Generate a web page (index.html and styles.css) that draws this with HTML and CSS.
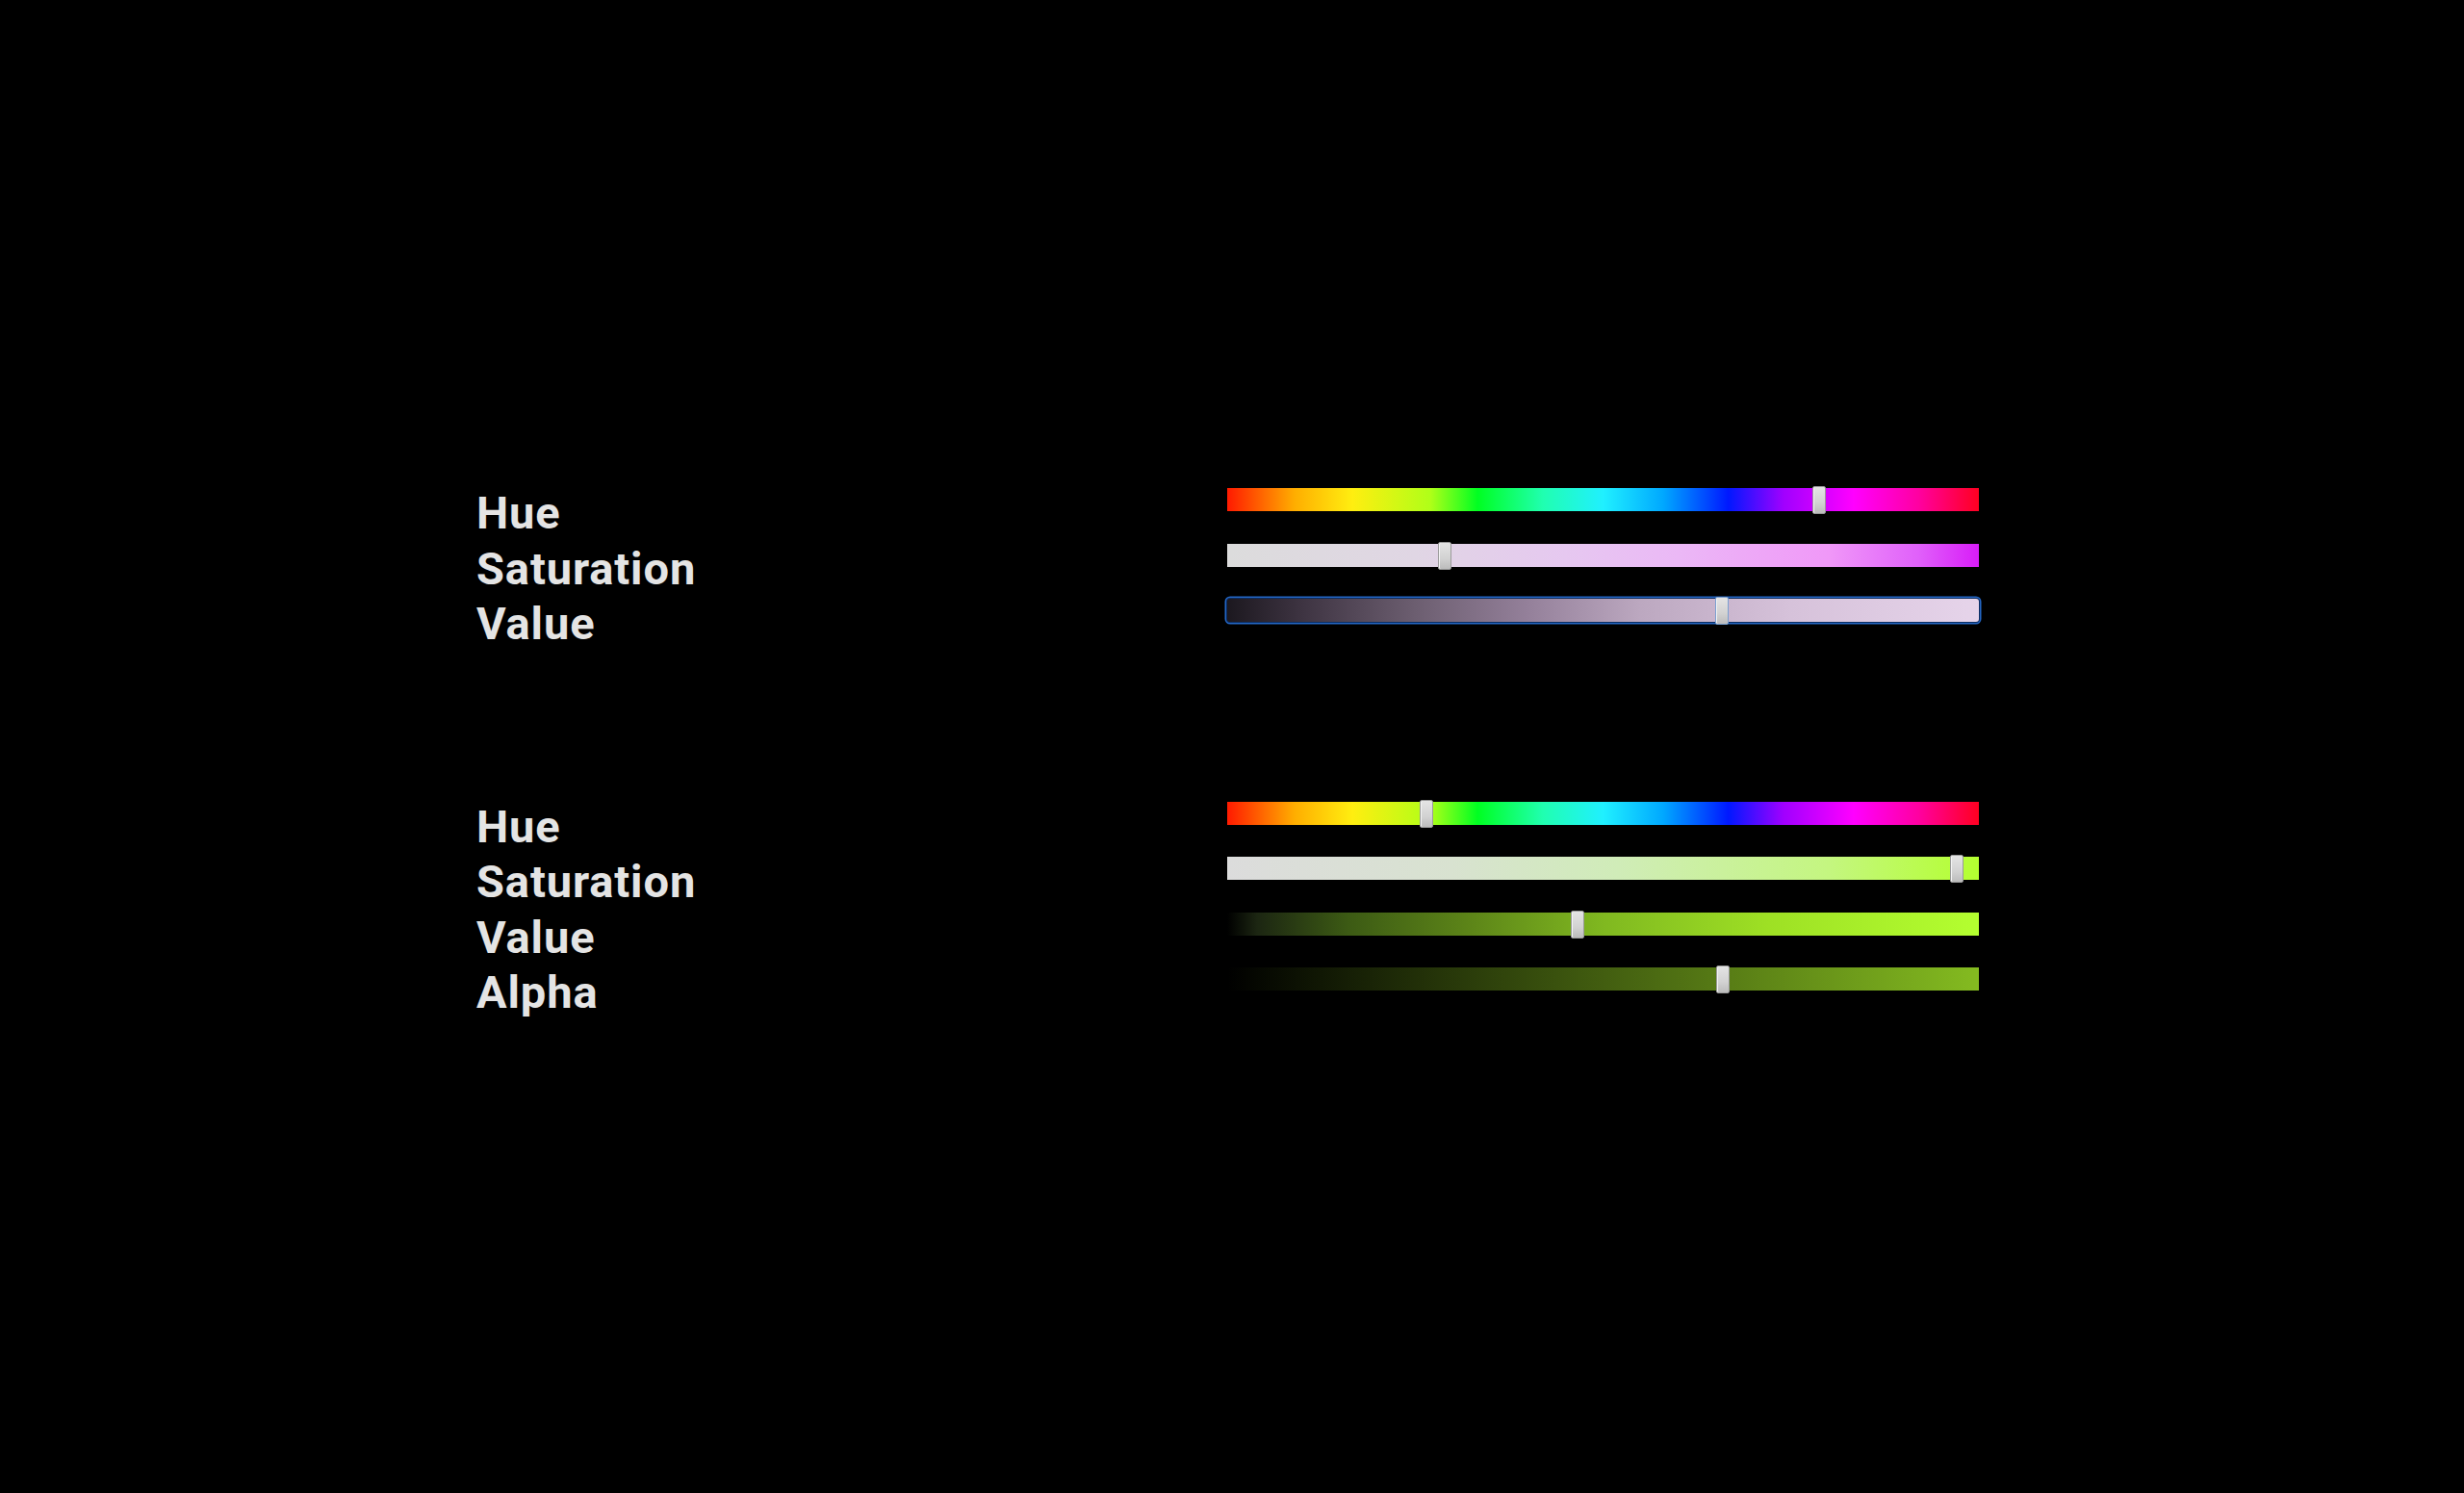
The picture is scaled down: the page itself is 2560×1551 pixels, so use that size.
FILE: index.html
```html
<!DOCTYPE html>
<html lang="en">
<head>
  <meta charset="UTF-8">
  <title>Color Sliders</title>
  <link rel="stylesheet" href="styles.css">
</head>
<body>

  <div class="panel">

    <div class="grupo">
      <div class="fila">
        <span class="etiqueta">Hue</span>
        <div class="barra hue"><span class="mango" style="left:608px"></span></div>
      </div>
      <div class="fila">
        <span class="etiqueta">Saturation</span>
        <div class="barra sat-violeta"><span class="mango" style="left:219px"></span></div>
      </div>
      <div class="fila">
        <span class="etiqueta">Value</span>
        <div class="barra val-violeta enfocada"><span class="mango" style="left:507px"></span></div>
      </div>
    </div>

    <div class="grupo">
      <div class="fila">
        <span class="etiqueta">Hue</span>
        <div class="barra hue"><span class="mango" style="left:200px"></span></div>
      </div>
      <div class="fila">
        <span class="etiqueta">Saturation</span>
        <div class="barra sat-lima"><span class="mango" style="left:751px"></span></div>
      </div>
      <div class="fila">
        <span class="etiqueta">Value</span>
        <div class="barra val-lima"><span class="mango" style="left:357px"></span></div>
      </div>
      <div class="fila">
        <span class="etiqueta">Alpha</span>
        <div class="barra alfa-lima"><span class="mango" style="left:508px"></span></div>
      </div>
    </div>

  </div>

</body>
</html>
```

FILE: styles.css
```css
html, body {
  margin: 0;
  background: #000;
}

body {
  font-family: Roboto, "Liberation Sans", sans-serif;
  color: #e4e4e4;
}

.panel {
  padding: 504px 0 0 495px;
  display: flex;
  flex-direction: column;
  gap: 153px;
}

.grupo {
  display: grid;
  grid-auto-rows: 57.5px;
}

.fila {
  display: grid;
  grid-template-columns: 780px 781px;
  align-items: start;
}

.etiqueta {
  font-size: 47px;
  font-weight: 700;
  line-height: 57.5px;
  letter-spacing: 0.9px;
}

.barra {
  position: relative;
  height: 24px;
  margin-top: 3px;
}

.mango {
  position: absolute;
  top: -2px;
  width: 12px;
  height: 27px;
  border: 1px solid #9a9a9a;
  border-radius: 2px;
  background: linear-gradient(to bottom, #e4e4e4, #d2d2d2 60%, #bcbcbc);
  box-shadow: inset 1px 0 0 #f4f4f4;
}

.hue {
  background: linear-gradient(to right,
    #ff1a00 0%, #ffae00 9%, #ffee10 16.67%, #b0ff18 27%, #00ff22 33.33%,
    #20ffb0 42%, #20f0ff 50%, #00a8ff 58%, #0018ff 66.67%, #a000ff 74%,
    #ff00ff 83.33%, #ff00a0 92%, #ff0020 100%);
}

.sat-violeta {
  background: linear-gradient(to right,
    #dcdcdc 0%, #e0d6e4 25%, #e6c8f0 45%, #ebb8f6 60%, #f098f8 80%, #e060fa 92%, #d81cf8 100%);
}

.val-violeta {
  background: linear-gradient(to right,
    #1c181f 0%, #3e3442 10%, #6c5e70 25%, #94809a 40%, #bca8c0 55%, #d6c2da 75%, #e6d4ea 100%);
}

.enfocada {
  border-radius: 3px;
  box-shadow: 0 0 0 1px #0c2c60, 0 0 0 2.5px #2466c4;
}

.enfocada .mango {
  border-color: #7aa0d0;
}

.sat-lima {
  background: linear-gradient(to right,
    #dcdcdc 0%, #d8e2d0 30%, #d0ecb8 52%, #c4f680 80%, #b4ff30 100%);
}

.val-lima {
  background: linear-gradient(to right,
    #000 0%, #1c2612 4%, #3c5a14 16%, #5c8418 32%, #80b820 50%, #9ee024 72%, #b4ff30 100%);
}

.alfa-lima {
  background: linear-gradient(to right, rgba(132, 187, 32, 0), rgba(132, 187, 32, 1));
}
```
